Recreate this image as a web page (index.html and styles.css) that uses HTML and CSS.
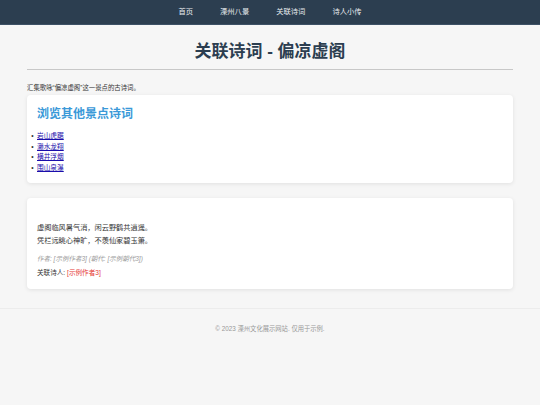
FILE: index.html
```html
<!DOCTYPE html>
<html lang="zh-CN">
<head>
<meta charset="utf-8">
<title>关联诗词 - 偏凉虚阁</title>
<link rel="stylesheet" href="styles.css">
</head>
<body>
<nav class="topnav">
  <a href="#">首页</a>
  <a href="#">溧州八景</a>
  <a href="#">关联诗词</a>
  <a href="#">诗人小传</a>
</nav>
<main class="container">
  <h1 class="page-title">关联诗词 - 偏凉虚阁</h1>
  <p class="intro">汇集歌咏“偏凉虚阁”这一景点的古诗词。</p>
  <section class="card">
    <h2 class="card-title">浏览其他景点诗词</h2>
    <ul class="spot-list">
      <li><a href="#">岩山虎踞</a></li>
      <li><a href="#">濑水龙翔</a></li>
      <li><a href="#">横井浮烟</a></li>
      <li><a href="#">围山泉瀑</a></li>
    </ul>
  </section>
  <section class="card poem-card">
    <div class="poem">
      <p>虚阁临风暑气消，闲云野鹤共逍遥。</p>
      <p>凭栏远眺心神旷，不羡仙家碧玉箫。</p>
    </div>
    <p class="meta">作者: [示例作者3] (朝代: [示例朝代3])</p>
    <p class="poet">关联诗人: <a href="#">[示例作者3]</a></p>
  </section>
</main>
<footer class="footer">
  <p>© 2023 溧州文化展示网站. 仅用于示例.</p>
</footer>
</body>
</html>
```
FILE: styles.css
```css
* { box-sizing: border-box; }
html, body {
  margin: 0;
  padding: 0;
  background: #f6f6f6;
  font-family: "Liberation Sans", "Noto Sans CJK SC", sans-serif;
  color: #333;
}
.topnav {
  height: 25px;
  background: #2c3e50;
  display: flex;
  justify-content: center;
  align-items: center;
  gap: 27px;
  border-bottom: 1px solid #3d5166;
}
.topnav a {
  color: #e8ecef;
  text-decoration: none;
  font-size: 7.3px;
  line-height: 10px;
}
.container {
  margin: 0 27px;
}
.page-title {
  margin: 17px 0 0;
  padding-bottom: 7px;
  border-bottom: 1px solid #c8c8c8;
  text-align: center;
  font-size: 17px;
  line-height: 20px;
  font-weight: 700;
  color: #2c3e50;
}
.intro {
  margin: 13px 0 2px;
  font-size: 6.4px;
  line-height: 10px;
  color: #333;
}
.card {
  background: #fff;
  border-radius: 4px;
  box-shadow: 0 1px 4px rgba(0, 0, 0, 0.09);
  padding: 10px;
}
.card-title {
  margin: 0 0 8px;
  font-size: 12px;
  line-height: 18px;
  font-weight: 700;
  color: #3a99d8;
}
.spot-list {
  margin: 0;
  padding: 0;
  font-size: 6.7px;
  line-height: 10.5px;
  list-style-type: "•\2002";
}
.spot-list a {
  color: #1a0dab;
  text-decoration: underline;
}
.poem-card {
  margin-top: 15px;
  padding: 22.5px 10px 11px;
}
.poem p {
  margin: 0;
  font-size: 7.2px;
  line-height: 13px;
  color: #333;
}
.meta {
  margin: 7.5px 0 0;
  font-size: 6.5px;
  line-height: 10px;
  font-style: italic;
  color: #999;
}
.poet {
  margin: 4px 0 0;
  font-size: 6.6px;
  line-height: 10px;
  color: #333;
}
.poet a {
  color: #e53935;
  text-decoration: none;
}
.footer {
  margin-top: 19px;
  border-top: 1px solid #ececec;
  padding-top: 15px;
  text-align: center;
}
.footer p {
  margin: 0;
  font-size: 6.3px;
  line-height: 10px;
  color: #999;
}
```
